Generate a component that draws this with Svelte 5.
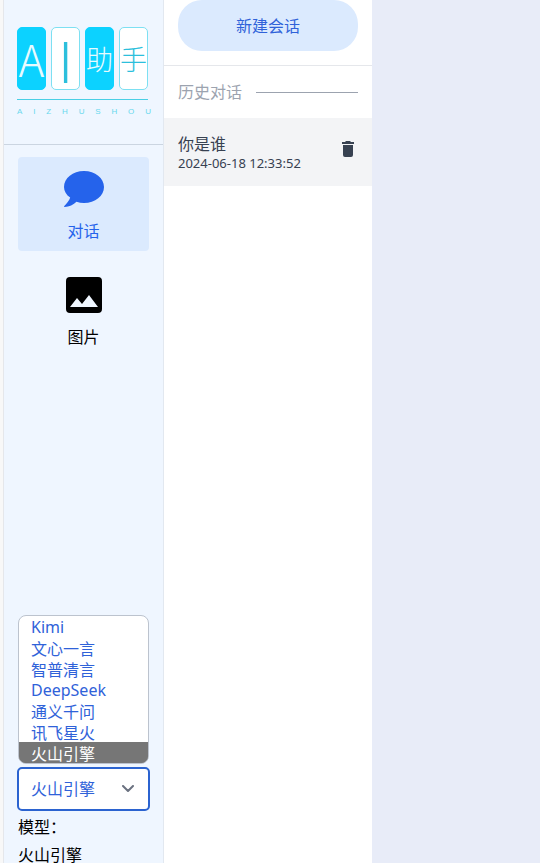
<script>
  const providers = ['Kimi', '文心一言', '智普清言', 'DeepSeek', '通义千问', '讯飞星火', '火山引擎'];
  const tagline = 'AIZHUSHOU'.split('');
  let provider = $state('火山引擎');
  let chats = $state([{ title: '你是谁', time: '2024-06-18 12:33:52' }]);
</script>

<div class="shell">
  <aside class="sidebar">
    <div class="logo">
      <div class="tiles">
        <span class="tile solid latin">A</span>
        <span class="tile latin tall">I</span>
        <span class="tile solid">助</span>
        <span class="tile">手</span>
      </div>
      <div class="tagline">
        {#each tagline as letter}<span>{letter}</span>{/each}
      </div>
    </div>

    <nav>
      <a class="active" href="#chat">
        <svg width="40" height="36" viewBox="0 0 40 36" aria-hidden="true">
          <path fill="currentColor" d="M20 0C31.200 0 40 7.200 40 16s-8.800 16-20 16c-2.700 0-5.200-.4-7.500-1.200C9.500 33.800 5.200 36 .6 36c-.6 0-.8-.6-.3-1 2-2 5.200-5.400 5.900-8.400C2.300 23.900 0 20.200 0 16 0 7.200 8.800 0 20 0Z" />
        </svg>
        <span>对话</span>
      </a>
      <a href="#image">
        <svg width="36" height="36" viewBox="0 0 36 36" aria-hidden="true">
          <path fill="currentColor" fill-rule="evenodd" d="M4 0h28a4 4 0 0 1 4 4v28a4 4 0 0 1-4 4H4a4 4 0 0 1-4-4V4a4 4 0 0 1 4-4ZM11 21 4 30h28L23 18l-7 9Z" />
        </svg>
        <span>图片</span>
      </a>
    </nav>

    <div class="settings">
      <div class="picker">
        <select class="options" size="7" aria-label="模型厂商列表" bind:value={provider}>
          {#each providers as name}<option value={name}>{name}</option>{/each}
        </select>
        <select class="current" aria-label="模型厂商" bind:value={provider}>
          {#each providers as name}<option value={name}>{name}</option>{/each}
        </select>
        <svg class="chevron" width="12" height="8" viewBox="0 0 12 8" aria-hidden="true">
          <path d="M1 1l5 5 5-5" fill="none" stroke="#6b7280" stroke-width="2" stroke-linecap="round" stroke-linejoin="round" />
        </svg>
      </div>
      <p>模型：</p>
      <p class="model">{provider}</p>
    </div>
  </aside>

  <section class="history">
    <div class="top"><button class="new" type="button">新建会话</button></div>
    <h2>历史对话</h2>
    <ul>
      {#each chats as chat}
        <li>
          <div>
            <div class="title">{chat.title}</div>
            <time>{chat.time}</time>
          </div>
          <button class="delete" type="button" aria-label="删除" onclick={() => (chats = chats.filter((c) => c !== chat))}>
            <svg width="12" height="16" viewBox="0 0 12 16" aria-hidden="true">
              <path fill="currentColor" d="M0 1h3l1-1h4l1 1h3v2H0ZM1 4h10v10a2 2 0 0 1-2 2H3a2 2 0 0 1-2-2Z" />
            </svg>
          </button>
        </li>
      {/each}
    </ul>
  </section>

  <main></main>
</div>

<style>
  :global(body) {
    margin: 0;
    background: #e8ecf8;
  }
  .shell, .shell * {
    box-sizing: border-box;
  }
  .shell {
    display: flex;
    height: 100vh;
    overflow: hidden;
    padding-left: 3px;
    background: linear-gradient(90deg, #f8f8f8 3px, #e8ecf8 3px);
    font: 16px/24px "Noto Sans", "Noto Sans CJK SC", sans-serif;
    color: #000;
  }
  .sidebar {
    display: flex;
    flex-direction: column;
    flex: none;
    width: 161px;
    min-height: calc(100vh + 4px);
    background: #eff6ff;
    border-left: 1px solid #e5e7eb;
    border-right: 1px solid #e2e8f0;
  }
  .logo {
    height: 145px;
    padding: 27px 12px 0 13px;
    border-bottom: 1px solid #cbd5e1;
  }
  .tiles {
    display: flex;
    gap: 5px;
    padding-bottom: 9px;
    margin-right: 3px;
    border-bottom: 1px solid #49cfe5;
  }
  .tile {
    display: flex;
    align-items: center;
    justify-content: center;
    width: 29px;
    height: 63px;
    border: 1px solid #7de0f2;
    border-radius: 5px;
    background: #fff;
    color: #2cbfdc;
    font: 300 27px/61px "Noto Sans CJK SC", sans-serif;
  }
  .tile.latin {
    font-size: 44px;
  }
  .tile.tall {
    font-size: 56px;
    line-height: 56px;
  }
  .tile.solid {
    background: #0cd2ff;
    border-color: #0cd2ff;
    color: #e8fbff;
  }
  .tagline {
    display: flex;
    justify-content: space-between;
    margin-top: 7px;
    font: 8px/10px "Liberation Sans", sans-serif;
    color: #68d8ed;
  }
  nav {
    display: flex;
    flex-direction: column;
    gap: 12px;
    padding: 12px 14px;
  }
  nav a {
    display: flex;
    flex-direction: column;
    align-items: center;
    gap: 12px;
    height: 94px;
    padding-top: 14px;
    border-radius: 4px;
    color: #000;
    text-decoration: none;
  }
  nav a.active {
    background: #dbeafe;
    color: #2563eb;
  }
  .settings {
    margin-top: auto;
    padding: 0 13px;
  }
  .picker {
    position: relative;
  }
  select {
    display: block;
    appearance: none;
    font: inherit;
    color: #2f62d9;
    background: #fff;
    outline: none;
  }
  .current {
    width: 100%;
    height: 44px;
    padding: 0 12px;
    border: 2px solid #2b63d0;
    border-radius: 5px;
  }
  .options {
    position: absolute;
    left: 1px;
    right: 1px;
    bottom: calc(100% + 3px);
    width: calc(100% - 2px);
    height: 149px;
    padding: 0;
    overflow: hidden;
    border: 1px solid #bcc3ce;
    border-radius: 8px;
  }
  .options option {
    display: flex;
    align-items: center;
    height: 21px;
    min-height: 21px;
    padding: 0 12px;
  }
  .options option:checked {
    background: #767676 linear-gradient(#767676, #767676);
    color: #fff !important;
  }
  .chevron {
    position: absolute;
    right: 16px;
    top: 18px;
    pointer-events: none;
  }
  p {
    margin: 4px 1px;
  }
  p.model {
    margin: 3px 1px 0;
  }
  .history {
    flex: none;
    width: 208px;
    background: #fff;
  }
  .top {
    height: 66px;
    padding: 0 14px;
    border-bottom: 1px solid #e5e7eb;
  }
  button {
    border: 0;
    font: inherit;
    cursor: pointer;
  }
  .new {
    display: block;
    width: 100%;
    height: 51px;
    border-radius: 24px;
    background: #dbeafe;
    color: #2f62d9;
  }
  h2 {
    display: flex;
    align-items: center;
    gap: 14px;
    height: 52px;
    margin: 0;
    padding: 0 14px;
    font: inherit;
    color: #9ca3af;
  }
  h2::after {
    content: "";
    flex: 1;
    height: 1px;
    background: #9ca3af;
  }
  ul {
    margin: 0;
    padding: 0;
    list-style: none;
  }
  li {
    display: flex;
    justify-content: space-between;
    height: 68px;
    padding: 14px 18px 0 14px;
    background: #f3f4f6;
    color: #374151;
  }
  time {
    display: block;
    font-size: 13px;
    line-height: 15px;
  }
  .delete {
    display: flex;
    height: 34px;
    padding: 9px 0;
    background: none;
    color: #374151;
  }
  main {
    flex: 1;
    background: #e8ecf8;
  }
</style>
